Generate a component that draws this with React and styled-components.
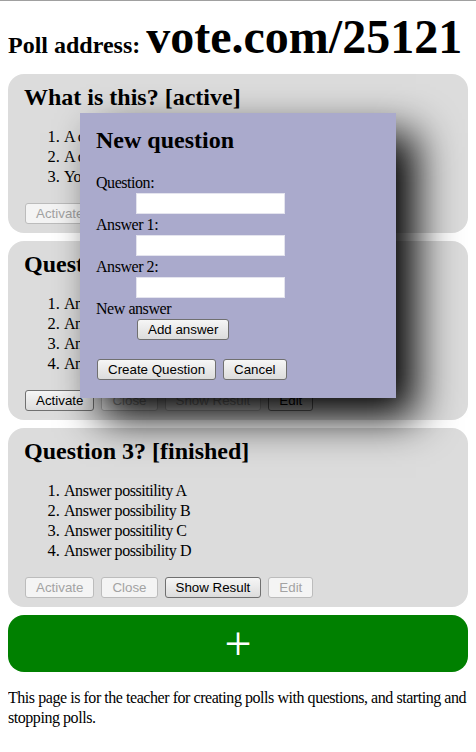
import React from "react";
import styled, { createGlobalStyle } from "styled-components";

const Global = createGlobalStyle`
  html {
    border-top: 1px solid #a0a0a0;
  }
  body {
    margin: 8px;
    font-family: "Liberation Serif", "Times New Roman", serif;
    font-size: 16px;
    color: #000;
    background: #fff;
  }
`;

const Page = styled.div`
  position: relative;
`;

const Title = styled.h1`
  margin: 4px 0 13px;
  font-size: 24px;
  line-height: 1;
  font-weight: bold;
`;

const Address = styled.span`
  font-size: 48px;
  line-height: 1;
`;

const Card = styled.section`
  background: #dcdcdc;
  border-radius: 16px;
  padding: 10px 16px 9px;
  margin-bottom: 8px;
`;

const CardTitle = styled.h2`
  margin: 0;
  font-size: 24px;
  line-height: 27px;
  font-weight: bold;
`;

const Answers = styled.ol`
  margin: 16px 0;
  padding-left: 40px;
  line-height: 20px;
`;

const Answer = styled.li`
  letter-spacing: -0.45px;

  &::marker {
    letter-spacing: 0;
    font-size: 16.5px;
  }
`;

const Row = styled.div`
  display: flex;
  gap: ${(p) => p.$gap || 5}px;
  margin-left: ${(p) => p.$indent || 0}px;
`;

const Button = styled.button`
  height: 21px;
  margin: 0 1px;
  padding: 0 10px;
  font-family: "Liberation Sans", Arial, sans-serif;
  font-size: 13.33px;
  line-height: 19px;
  border-radius: 3px;
  border: 1px solid ${(p) => (p.disabled ? "#bcbcbc" : "#707070")};
  color: ${(p) => (p.disabled ? "#a3a3a3" : "#000")};
  background: ${(p) =>
    p.disabled ? "#f4f4f4" : "linear-gradient(#f6f6f6, #dcdcdc)"};
`;

const AddButton = styled.button`
  display: block;
  width: 100%;
  height: 57px;
  border: none;
  border-radius: 16px;
  background: #008000;
  color: #fff;
  font-family: "Liberation Serif", "Times New Roman", serif;
  font-size: 48px;
  line-height: 57px;
  padding: 0 0 4px;
`;

const Note = styled.p`
  margin: 16px 0;
  line-height: 20px;
  letter-spacing: -0.45px;
`;

const Dialog = styled.div`
  position: absolute;
  left: 72px;
  top: 100px;
  width: 316px;
  box-sizing: border-box;
  padding: 14px 16px 18px;
  background: #aaaacc;
  box-shadow: 20px 20px 40px #000;
`;

const DialogTitle = styled(CardTitle)`
  margin-bottom: 19px;
`;

const Label = styled.div`
  line-height: 20px;
  letter-spacing: -0.45px;
`;

const Input = styled.input`
  display: block;
  box-sizing: border-box;
  width: 149px;
  height: 21px;
  margin: 0 0 1px 40px;
  border: 1px solid #e4e4ee;
  background: #fff;
  padding: 0 2px;
`;

const Actions = styled(Row)`
  margin-top: 19px;
`;

const questions = [
  {
    title: "What is this? [active]",
    answers: ["A cat", "A dog", "You don't know"],
    state: [false, true, true, false],
  },
  {
    title: "Question 2? [new]",
    answers: [
      "Answer possibility A",
      "Answer possibility B",
      "Answer possibility C",
      "Answer possibility D",
    ],
    state: [true, false, false, true],
  },
  {
    title: "Question 3? [finished]",
    answers: [
      "Answer possitility A",
      "Answer possibility B",
      "Answer possitility C",
      "Answer possibility D",
    ],
    state: [false, false, true, false],
  },
];

const labels = ["Activate", "Close", "Show Result", "Edit"];

function QuestionCard({ q }) {
  return (
    <Card>
      <CardTitle>{q.title}</CardTitle>
      <Answers>
        {q.answers.map((a) => (
          <Answer key={a}>{a}</Answer>
        ))}
      </Answers>
      <Row>
        {labels.map((l, i) => (
          <Button key={l} disabled={!q.state[i]}>
            {l}
          </Button>
        ))}
      </Row>
    </Card>
  );
}

export default function App() {
  return (
    <Page>
      <Global />
      <Title>
        Poll address: <Address>vote.com/25121</Address>
      </Title>
      {questions.map((q) => (
        <QuestionCard key={q.title} q={q} />
      ))}
      <AddButton>+</AddButton>
      <Note>
        This page is for the teacher for creating polls with questions, and
        starting and stopping polls.
      </Note>

      <Dialog>
        <DialogTitle>New question</DialogTitle>
        <Label>Question:</Label>
        <Input type="text" />
        <Label>Answer 1:</Label>
        <Input type="text" />
        <Label>Answer 2:</Label>
        <Input type="text" />
        <Label>New answer</Label>
        <Row $indent={40}>
          <Button>Add answer</Button>
        </Row>
        <Actions $gap={5}>
          <Button>Create Question</Button>
          <Button>Cancel</Button>
        </Actions>
      </Dialog>
    </Page>
  );
}
